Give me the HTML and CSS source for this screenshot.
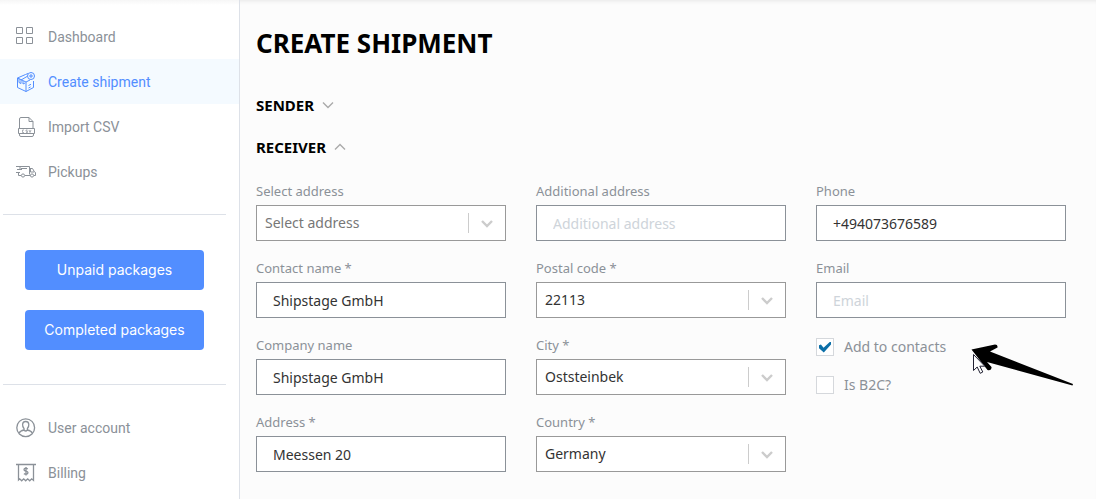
FILE: index.html
```html
<!DOCTYPE html>
<html lang="en">
<head>
<meta charset="utf-8">
<meta name="viewport" content="width=device-width, initial-scale=1">
<title>Create shipment</title>
<link rel="stylesheet" href="styles.css">
</head>
<body>
<div class="app">
  <aside class="sidebar">
    <nav class="menu">
      <a class="menu-item" href="#">
        <svg class="icon" viewBox="0 0 20 20"><path d="M.5 .5h6v6h-6zM10.500 .5h6v6h-6zM.5 10.500h6v6h-6zM10.500 10.500h6v6h-6z"/></svg>
        Dashboard
      </a>
      <a class="menu-item active" href="#">
        <svg class="icon" viewBox="0 0 20 20"><path d="M1.500 6v9.500L10 19.500l7.500-4V9M10 10v9.500M1.500 6l8.500 4 4-2M1.500 6l8-3.500 2.500-1M3 6.500v4l2 1V8l6-3.500M7 9v3l2-1M12.500 13.500l2.500-1.200M12.500 16l2-1"/><circle cx="15" cy="4" r="3.500"/><path d="M15 2v4M13 4h4"/></svg>
        Create shipment
      </a>
      <a class="menu-item" href="#">
        <svg class="icon" viewBox="0 0 20 20"><path d="M3.500 11V2q0-1.500 1.500-1.500h8l4 4V11M13 .5v4h4M2.500 11.500h16v5h-16zM3.500 16.500V18q0 1.500 1.500 1.500h11q1.500 0 1.500-1.500v-1.500"/><path class="fine" d="M8 13H6.500v2.500H8M11.500 13H10v1.200h1.500v1.300H10M13 13l1 2.500 1-2.500"/></svg>
        Import CSV
      </a>
      <a class="menu-item" href="#">
        <svg class="icon" viewBox="0 0 20 20"><path d="M0 4.500h13.500v8M1 7.500h5M0 10.500h4M2.500 10.500v3H5M4 4.500v3M13.500 6.500h3l2 3.500 1 .5v3H18M14.500 13.500H9M14.500 7v3h3.500M5 6.500h6"/><circle cx="7" cy="13.500" r="1.600"/><circle cx="16" cy="13.500" r="1.600"/></svg>
        Pickups
      </a>
    </nav>
    <hr class="divider">
    <div class="actions">
      <button class="button" type="button">Unpaid packages</button>
      <button class="button" type="button">Completed packages</button>
    </div>
    <hr class="divider">
    <nav class="menu">
      <a class="menu-item" href="#">
        <svg class="icon bold" viewBox="0 0 20 20"><circle cx="9.700" cy="9.700" r="8.900"/><path d="M9.700 3.500c-4.200 0-3.500 5-1.700 7v1.500c-2 .5-4 1-4.800 3M9.700 3.500c4.200 0 3.500 5 1.700 7v1.500c2 .5 4 1 4.800 3M8 12q1.700 2 3.400 0"/></svg>
        User account
      </a>
      <a class="menu-item" href="#">
        <svg class="icon bold" viewBox="0 0 20 20"><path d="M0 1.500h20M2.500 1.500v15.500l1.200-1.200 2 2 2-2 2 2 2-2 2 2 2-2 1.800 1.600V1.500M11.800 6q-2-1.500-3.500-.3-1 1.800 1.500 2.400 3 .8 1.800 2.500-1.500 1.400-3.700 0M10 4v8.500"/></svg>
        Billing
      </a>
    </nav>
  </aside>

  <main class="content">
    <h1 class="title">Create shipment</h1>
    <button class="section" type="button" aria-expanded="false">Sender
      <svg class="caret" viewBox="0 0 12 8"><path d="M1 1.500l5 5 5-5"/></svg>
    </button>
    <button class="section" type="button" aria-expanded="true">Receiver
      <svg class="caret" viewBox="0 0 12 8"><path d="M1 6.500l5-5 5 5"/></svg>
    </button>

    <form class="form">
      <div class="column">
        <div class="field">
          <label class="label" for="saved">Select address</label>
          <div class="picker">
            <select class="control select placeholder" id="saved"><option>Select address</option></select>
            <svg class="arrow" viewBox="0 0 14 10"><path d="M2 3l5 5 5-5"/></svg>
          </div>
        </div>
        <div class="field">
          <label class="label" for="contact">Contact name *</label>
          <input class="control" id="contact" type="text" value="Shipstage GmbH">
        </div>
        <div class="field">
          <label class="label" for="company">Company name</label>
          <input class="control" id="company" type="text" value="Shipstage GmbH">
        </div>
        <div class="field">
          <label class="label" for="address">Address *</label>
          <input class="control" id="address" type="text" value="Meessen 20">
        </div>
      </div>

      <div class="column">
        <div class="field">
          <label class="label" for="additional">Additional address</label>
          <input class="control" id="additional" type="text" placeholder="Additional address">
        </div>
        <div class="field">
          <label class="label" for="postal">Postal code *</label>
          <div class="picker">
            <select class="control select" id="postal"><option>22113</option></select>
            <svg class="arrow" viewBox="0 0 14 10"><path d="M2 3l5 5 5-5"/></svg>
          </div>
        </div>
        <div class="field">
          <label class="label" for="city">City *</label>
          <div class="picker">
            <select class="control select" id="city"><option>Oststeinbek</option></select>
            <svg class="arrow" viewBox="0 0 14 10"><path d="M2 3l5 5 5-5"/></svg>
          </div>
        </div>
        <div class="field">
          <label class="label" for="country">Country *</label>
          <div class="picker">
            <select class="control select" id="country"><option>Germany</option></select>
            <svg class="arrow" viewBox="0 0 14 10"><path d="M2 3l5 5 5-5"/></svg>
          </div>
        </div>
      </div>

      <div class="column">
        <div class="field">
          <label class="label" for="phone">Phone</label>
          <input class="control" id="phone" type="tel" value="+494073676589">
        </div>
        <div class="field">
          <label class="label" for="email">Email</label>
          <input class="control" id="email" type="email" placeholder="Email">
        </div>
        <div class="checks">
          <label class="check"><input class="box" type="checkbox" checked>Add to contacts</label>
          <label class="check"><input class="box" type="checkbox">Is B2C?</label>
          <svg class="pointer" viewBox="0 0 104 44" aria-hidden="true">
            <path d="M1.500 6.500L25 1.500Q28 1.500 27.500 4.500L20 8.500l83 32.500-.5 1.500L17 19l4.500 5Q22 28 17.500 27z"/>
            <path class="cursor" d="M3.500 11.500v16l3.700-3.500 3 6.300 2.600-1.300-3-5.800h5z"/>
          </svg>
        </div>
      </div>
    </form>
  </main>
</div>
</body>
</html>
```

FILE: styles.css
```css
* {
  box-sizing: border-box;
}

body {
  margin: 0;
  background: #fcfcfc;
  font-family: "Noto Sans", sans-serif;
  font-size: 14px;
  line-height: 20px;
}

.app {
  display: flex;
  min-height: 100vh;
  box-shadow: inset 0 4px 4px -3px #e6e6e6;
}

.sidebar {
  flex: 0 0 240px;
  padding-top: 14px;
  border-right: 1px solid #dde1e8;
  background: linear-gradient(#f6f6f6, #fff 5px);
  font-family: Inter, sans-serif;
}

.menu-item {
  display: flex;
  align-items: center;
  gap: 12px;
  height: 45px;
  padding-left: 16px;
  color: #8b9198;
  font-family: Roboto, sans-serif;
  font-size: 14px;
  text-decoration: none;
}

.menu-item.active {
  background: #f4faff;
  color: #528eff;
}

.icon {
  width: 20px;
  height: 20px;
  fill: none;
  stroke: currentColor;
  stroke-width: 1;
}

.icon.bold {
  stroke-width: 1.3;
}

.icon .fine {
  stroke-width: 0.7;
}

.divider {
  height: 1px;
  margin: 20px 13px 20px 3px;
  border: 0;
  background: #dde1e8;
}

.actions {
  display: flex;
  flex-direction: column;
  gap: 20px;
  padding: 15px 35px 14px 25px;
}

.button {
  height: 40px;
  border: 0;
  border-radius: 4px;
  background: #528eff;
  color: #fff;
  font: inherit;
}

.content {
  flex: 1;
  padding: 27px 30px 27px 16px;
}

.title {
  margin: 0 0 36px;
  color: #000;
  font-size: 26px;
  font-weight: 700;
  line-height: 32px;
  text-transform: uppercase;
}

.section {
  display: flex;
  align-items: center;
  gap: 8px;
  margin: 0 0 22px;
  padding: 0;
  border: 0;
  background: none;
  color: #000;
  font: inherit;
  font-size: 15px;
  font-weight: 700;
  text-transform: uppercase;
}

.caret {
  width: 12px;
  height: 8px;
  fill: none;
  stroke: #aaa;
  stroke-width: 1.4;
}

.form {
  display: grid;
  grid-template-columns: repeat(3, 1fr);
  gap: 30px;
  padding-top: 2px;
}

.column {
  display: flex;
  flex-direction: column;
  gap: 17px;
}

.field {
  display: flex;
  flex-direction: column;
  gap: 4px;
}

.label {
  color: #8b9198;
  font-size: 13px;
}

.control {
  width: 100%;
  height: 36px;
  padding: 0 16px;
  border: 1px solid #8b9198;
  border-radius: 0;
  background: #fff;
  color: #333;
  font: inherit;
}

.control::placeholder {
  color: #ced4da;
}

.picker {
  display: grid;
  align-items: center;
}

.picker > * {
  grid-area: 1 / 1;
}

.select {
  padding: 0 48px 0 8px;
  border-color: #999;
  appearance: none;
}

.select.placeholder {
  color: #777;
}

.arrow {
  justify-self: end;
  box-sizing: content-box;
  width: 14px;
  height: 10px;
  padding: 5px 12px 5px 11px;
  border-left: 1px solid #ccc;
  fill: none;
  stroke: #ccc;
  stroke-width: 2.4;
  pointer-events: none;
}

.checks {
  position: relative;
  display: flex;
  flex-direction: column;
  gap: 18px;
  padding-top: 2px;
}

.check {
  display: flex;
  align-items: center;
  gap: 10px;
  color: #8b9198;
}

.box {
  display: grid;
  place-items: center;
  width: 18px;
  height: 18px;
  margin: 0;
  border: 1px solid #d5d8dc;
  background: #fff;
  appearance: none;
}

.box:checked::before {
  content: "";
  width: 12px;
  height: 11px;
  background: #0b6fa8;
  clip-path: polygon(0 34%, 16% 28%, 38% 56%, 94% 0, 100% 0, 100% 28%, 40% 100%, 0 62%);
}

.pointer {
  position: absolute;
  top: 8px;
  left: 154px;
  width: 104px;
  height: 44px;
  overflow: visible;
  pointer-events: none;
}

.cursor {
  fill: #fff;
  stroke: #223;
  stroke-width: 1;
}
```
